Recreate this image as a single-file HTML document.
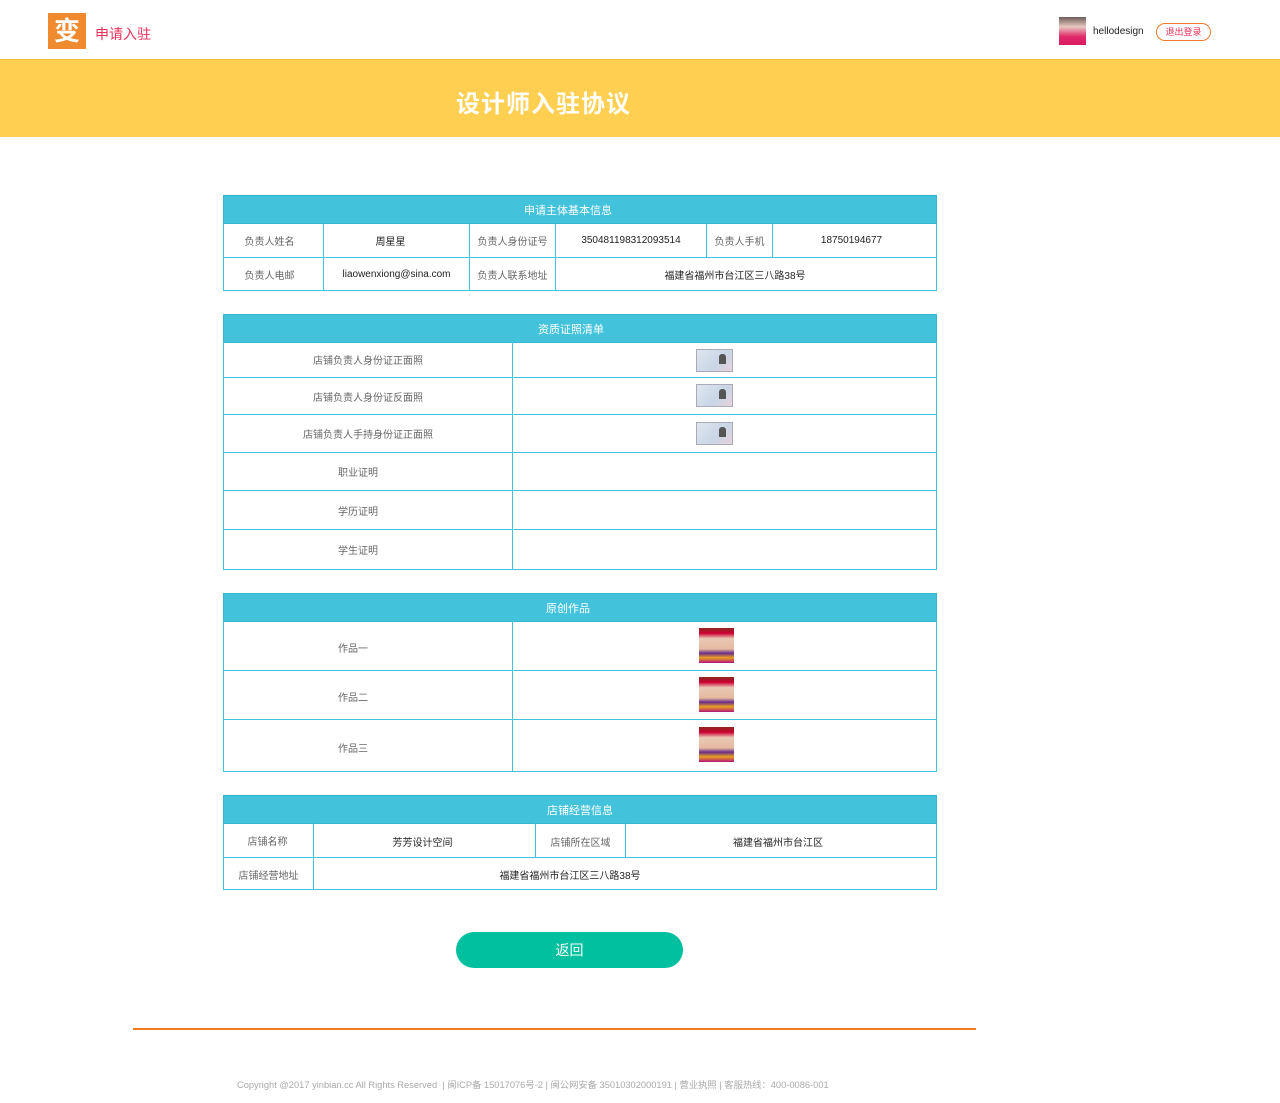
<!DOCTYPE html>
<html><head><meta charset="utf-8"><style>
*{margin:0;padding:0;box-sizing:border-box}
body{width:1280px;height:1103px;position:relative;background:#fff;font-family:"Liberation Sans","Noto Sans CJK SC",sans-serif;overflow:hidden}
.a{position:absolute}
.c{position:absolute;display:flex;align-items:center;justify-content:center;font-size:10px;color:#666;border-right:1px solid #43c2dc;border-bottom:1px solid #43c2dc}
.v{color:#222}
.hd{position:absolute;left:223px;width:714px;height:29px;background:#43c2dc;color:#fff;font-size:11px;display:flex;align-items:center;justify-content:center;border:1px solid #36b6d2}
.box{position:absolute;left:223px;width:714px;border:1px solid #43c2dc;border-top:none}
.id{position:absolute;width:37px;height:23px;background:linear-gradient(135deg,#dfe6ef,#c9d6e6 60%,#e6d3dc);border:1px solid #aab;}
.id:after{content:"";position:absolute;right:6px;top:4px;width:7px;height:10px;background:#555;border-radius:3px 3px 0 0}
.art{position:absolute;width:35px;height:35px;background:linear-gradient(180deg,#8b2a1f 0,#c03 15%,#e8c9b5 30%,#e6b9a0 60%,#6a2d8a 72%,#e8a020 85%,#b0157a 100%)}
</style></head><body>
<div class="a" style="left:48px;top:13px;width:38px;height:36px;background:#ef8a2e;color:#fff;font-size:26px;font-weight:bold;text-align:center;line-height:36px">变</div>
<div class="a" style="left:95px;top:24px;font-size:14px;color:#e8305a">申请入驻</div>
<div class="a" style="left:1059px;top:17px;width:27px;height:28px;background:linear-gradient(180deg,#6b5d58 0,#e8c8c0 35%,#e02a6a 70%,#d81b60)"></div>
<div class="a" style="left:1093px;top:26px;font-size:10px;color:#222">hellodesign</div>
<div class="a" style="left:1156px;top:23px;width:55px;height:18px;border:1px solid #f07a2a;border-radius:9px;font-size:9px;color:#e8305a;text-align:center;line-height:16px">退出登录</div>
<div class="a" style="left:0;top:59px;width:1280px;height:78px;background:#ffcf52;border-top:1px solid #f5c040"></div>
<div class="a" style="left:456px;top:84px;font-size:24px;color:#fff;letter-spacing:1px;font-weight:bold">设计师入驻协议</div>

<div class="hd" style="top:195px;padding-right:24px">申请主体基本信息</div>
<div class="box" style="top:224px;height:67px"></div>
<div class="c" style="left:224px;top:224px;width:100px;height:34px;padding-right:8px">负责人姓名</div>
<div class="c v" style="left:324px;top:224px;width:146px;height:34px;padding-right:12px">周星星</div>
<div class="c" style="left:470px;top:224px;width:86px;height:34px">负责人身份证号</div>
<div class="c v" style="left:556px;top:224px;width:151px;height:34px">350481198312093514</div>
<div class="c" style="left:707px;top:224px;width:66px;height:34px">负责人手机</div>
<div class="c v" style="left:773px;top:224px;width:163px;height:34px;border-right:none;padding-right:6px">18750194677</div>
<div class="c" style="left:224px;top:258px;width:100px;height:32px;border-bottom:none;padding-right:8px">负责人电邮</div>
<div class="c v" style="left:324px;top:258px;width:146px;height:32px;border-bottom:none">liaowenxiong@sina.com</div>
<div class="c" style="left:470px;top:258px;width:86px;height:32px;border-bottom:none">负责人联系地址</div>
<div class="c v" style="left:556px;top:258px;width:380px;height:32px;border:none;padding-right:22px">福建省福州市台江区三八路38号</div>

<div class="hd" style="top:314px;padding-right:18px">资质证照清单</div>
<div class="box" style="top:342px;height:228px"></div>
<div class="c" style="left:224px;top:342px;width:289px;height:36px">店铺负责人身份证正面照</div>
<div class="c" style="left:224px;top:378px;width:289px;height:37px">店铺负责人身份证反面照</div>
<div class="c" style="left:224px;top:415px;width:289px;height:38px">店铺负责人手持身份证正面照</div>
<div class="c" style="left:224px;top:453px;width:289px;height:38px;padding-right:20px">职业证明</div>
<div class="c" style="left:224px;top:491px;width:289px;height:39px;padding-right:20px">学历证明</div>
<div class="c" style="left:224px;top:530px;width:289px;height:39px;border-bottom:none;padding-right:20px">学生证明</div>
<div class="c" style="left:513px;top:342px;width:423px;height:36px;border-right:none"></div>
<div class="c" style="left:513px;top:378px;width:423px;height:37px;border-right:none"></div>
<div class="c" style="left:513px;top:415px;width:423px;height:38px;border-right:none"></div>
<div class="c" style="left:513px;top:453px;width:423px;height:38px;border-right:none"></div>
<div class="c" style="left:513px;top:491px;width:423px;height:39px;border-right:none"></div>
<div class="id" style="left:696px;top:349px"></div>
<div class="id" style="left:696px;top:384px"></div>
<div class="id" style="left:696px;top:422px"></div>

<div class="hd" style="top:593px;padding-right:24px">原创作品</div>
<div class="box" style="top:621px;height:151px"></div>
<div class="c" style="left:224px;top:621px;width:289px;height:50px;justify-content:flex-start;padding-left:114px;padding-top:4px">作品一</div>
<div class="c" style="left:224px;top:671px;width:289px;height:49px;justify-content:flex-start;padding-left:114px;padding-top:2px">作品二</div>
<div class="c" style="left:224px;top:720px;width:289px;height:51px;border-bottom:none;justify-content:flex-start;padding-left:114px;padding-top:4px">作品三</div>
<div class="c" style="left:513px;top:621px;width:423px;height:50px;border-right:none"></div>
<div class="c" style="left:513px;top:671px;width:423px;height:49px;border-right:none"></div>
<div class="art" style="left:699px;top:628px"></div>
<div class="art" style="left:699px;top:677px"></div>
<div class="art" style="left:699px;top:727px"></div>

<div class="hd" style="top:795px">店铺经营信息</div>
<div class="box" style="top:823px;height:67px"></div>
<div class="c" style="left:224px;top:823px;width:90px;height:35px;padding-right:2px">店铺名称</div>
<div class="c v" style="left:314px;top:823px;width:222px;height:35px;padding-right:4px;padding-top:2px">芳芳设计空间</div>
<div class="c" style="left:536px;top:823px;width:90px;height:35px;padding-top:2px">店铺所在区域</div>
<div class="c v" style="left:626px;top:823px;width:310px;height:35px;border-right:none;padding-right:6px;padding-top:2px">福建省福州市台江区</div>
<div class="c" style="left:224px;top:858px;width:90px;height:31px;border-bottom:none;padding-top:2px">店铺经营地址</div>
<div class="c v" style="left:314px;top:858px;width:512px;height:31px;border:none;padding-top:2px">福建省福州市台江区三八路38号</div>

<div class="a" style="left:456px;top:932px;width:227px;height:36px;background:#00c0a0;border-radius:18px;color:#fff;font-size:14px;text-align:center;line-height:36px">返回</div>
<div class="a" style="left:133px;top:1028px;width:843px;height:2px;background:#f57a1f"></div>
<div class="a" style="left:237px;top:1077px;font-size:9.3px;color:#aaa;white-space:nowrap">Copyright @2017 yinbian.cc All Rights Reserved &nbsp;|&nbsp;闽ICP备 15017076号-2&nbsp;|&nbsp;闽公网安备 35010302000191&nbsp;|&nbsp;营业执照&nbsp;|&nbsp;客服热线：400-0086-001</div>
</body></html>
